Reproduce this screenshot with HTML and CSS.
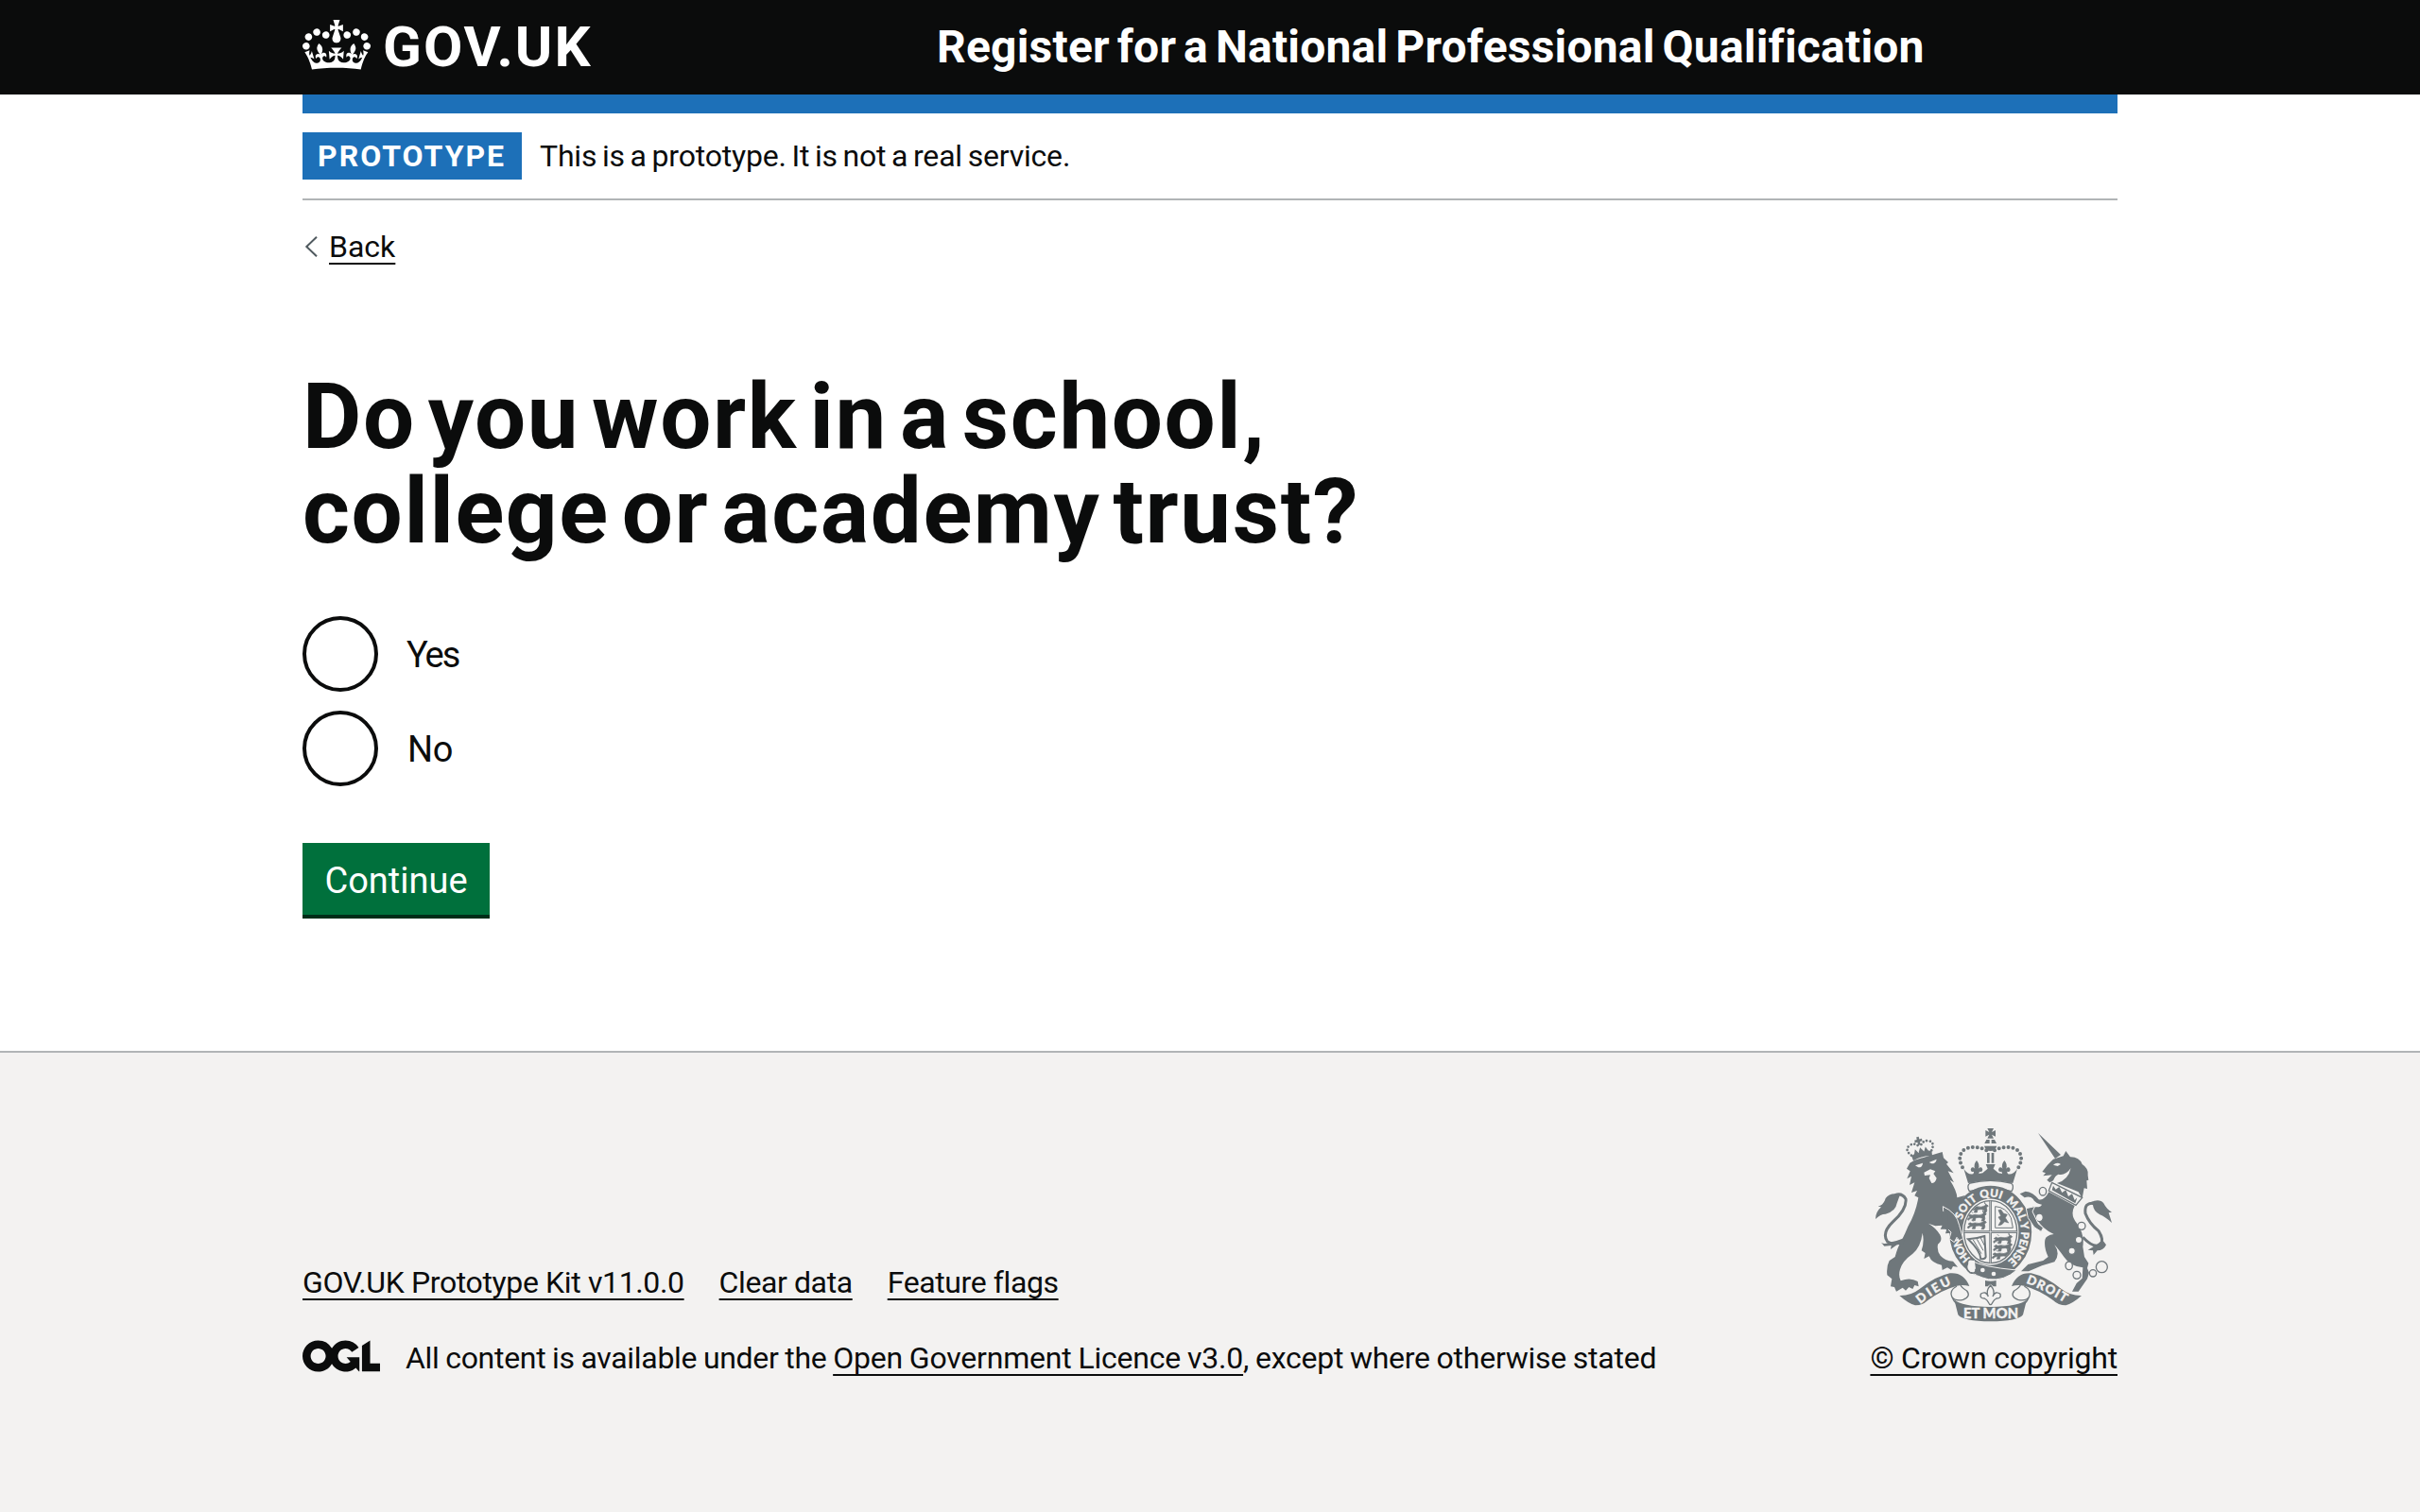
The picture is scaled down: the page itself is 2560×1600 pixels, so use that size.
FILE: index.html
```
<!DOCTYPE html>
<html lang="en">
<head>
<meta charset="utf-8">
<title>Do you work in a school, college or academy trust?</title>
<link rel="stylesheet" href="styles.css">
</head>
<body>
<header class="header">
  <div class="container header-inner">
    <a class="logo" href="#">
      <svg class="crown" viewBox="0 0 132 97" aria-hidden="true"><path fill="currentColor" d="M25 30.2c3.5 1.5 7.7-.2 9.1-3.7 1.5-3.6-.2-7.8-3.9-9.2-3.6-1.4-7.6.3-9.1 3.9-1.4 3.5.3 7.5 3.9 9zM9 39.5c3.6 1.5 7.8-.2 9.2-3.7 1.5-3.6-.2-7.8-3.9-9.1-3.6-1.5-7.6.2-9.1 3.8-1.4 3.5.3 7.5 3.8 9zM4.4 57.2c3.5 1.5 7.7-.2 9.1-3.8 1.5-3.6-.2-7.7-3.9-9.1-3.5-1.5-7.6.3-9.1 3.8-1.4 3.5.3 7.6 3.9 9.1zm38.3-21.4c3.5 1.5 7.7-.2 9.1-3.8 1.5-3.6-.2-7.7-3.9-9.1-3.6-1.5-7.6.3-9.1 3.8-1.3 3.6.4 7.7 3.9 9.1zm64.4-5.6c-3.6 1.5-7.8-.2-9.1-3.7-1.5-3.6.2-7.8 3.8-9.2 3.6-1.4 7.7.3 9.2 3.9 1.3 3.5-.4 7.5-3.9 9zm15.9 9.3c-3.6 1.5-7.7-.2-9.1-3.7-1.5-3.6.2-7.8 3.7-9.1 3.6-1.5 7.7.2 9.2 3.8 1.5 3.5-.3 7.5-3.8 9zm4.7 17.7c-3.6 1.5-7.8-.2-9.2-3.8-1.5-3.6.2-7.7 3.9-9.1 3.6-1.5 7.7.3 9.2 3.8 1.3 3.5-.4 7.6-3.9 9.1zM89.3 35.8c-3.6 1.5-7.8-.2-9.2-3.8-1.4-3.6.2-7.7 3.9-9.1 3.6-1.5 7.7.3 9.2 3.8 1.4 3.6-.3 7.7-3.9 9.1zM69.7 17.7l8.9 4.7V9.3l-8.9 2.8c-.2-.3-.5-.6-.9-.9L72.4 0H59.6l3.5 11.2c-.3.3-.6.5-.9.9l-8.8-2.8v13.1l8.8-4.7c.3.3.6.7.9.9l-5 15.4v.1c-.2.8-.4 1.6-.4 2.4 0 4.1 3.1 7.5 7 8.1h.2c.3 0 .7.1 1 .1.4 0 .7 0 1-.1h.2c4-.6 7.1-4.1 7.1-8.1 0-.8-.1-1.7-.4-2.4V34l-5.1-15.4c.4-.2.7-.6 1-.9zM66 92.8c16.9 0 32.8 1.1 47.1 3.2 4-16.9 8.9-26.7 14-33.5l-9.6-3.4c1 4.9 1.1 7.2 0 10.2-1.5-1.4-3-4.3-4.2-8.7L108.6 76c2.8-2 5-3.2 7.5-3.3-4.4 9.4-10 11.9-13.6 11.2-4.3-.8-6.3-4.6-5.6-7.9 1-4.7 5.7-5.9 8-.5 4.3-8.7-3-11.4-7.6-8.8 7.1-7.2 7.9-13.5 2.1-21.1-8 6.1-8.1 12.3-4.5 20.8-4.7-5.4-12.1-2.5-9.5 6.2 3.4-5.2 7.9-2 7.2 3.1-.6 4.3-6.4 7.8-13.5 7.2-10.3-.9-10.9-8-11.2-13.8 2.5-.5 7.1 1.8 11 7.3L80.2 60c-4.1 4.4-8 5.3-12.3 5.4 1.4-4.4 8-11.6 8-11.6H55.5s6.4 7.2 7.9 11.6c-4.2-.1-8-1-12.3-5.4l1.4 16.4c3.9-5.5 8.5-7.7 10.9-7.3-.3 5.8-.9 12.8-11.1 13.8-7.2.6-12.9-2.9-13.5-7.2-.7-5 3.8-8.3 7.1-3.1 2.7-8.7-4.6-11.6-9.4-6.2 3.7-8.5 3.6-14.7-4.6-20.8-5.8 7.6-5 13.9 2.2 21.1-4.7-2.6-11.9.1-7.7 8.8 2.3-5.5 7.1-4.2 8.1.5.7 3.3-1.3 7.1-5.7 7.9-3.5.7-9-1.8-13.5-11.2 2.5.1 4.7 1.3 7.5 3.3l-4.7-15.4c-1.2 4.4-2.7 7.2-4.3 8.7-1.1-3-.9-5.3 0-10.2l-9.5 3.4c5 6.9 9.9 16.7 14 33.5 14.8-2.1 30.8-3.2 47.7-3.2z"/></svg>
      <span class="logotype">GOV.UK</span>
    </a>
    <a class="service-name" href="#">Register for a National Professional Qualification</a>
  </div>
</header>
<div class="container">
  <div class="header-bar"></div>
  <div class="phase-banner">
    <strong class="tag">PROTOTYPE</strong>
    <span class="phase-text">This is a prototype. It is not a real service.</span>
  </div>
  <a class="back" href="#">
    <svg class="chevron" viewBox="0 0 14 22" aria-hidden="true"><path d="M13 .7 2.3 11 13 21.3" fill="none" stroke="#505a5f" stroke-width="2"/></svg>
    <span class="back-text">Back</span>
  </a>
  <main class="main">
    <h1 class="heading">Do you work in a school,<br>college or academy trust?</h1>
    <form class="form">
      <label class="radio"><input class="radio-input" type="radio" name="work"><span class="radio-text radio-yes">Yes</span></label>
      <label class="radio"><input class="radio-input" type="radio" name="work"><span class="radio-text">No</span></label>
      <button class="button" type="button">Continue</button>
    </form>
  </main>
</div>
<footer class="footer">
  <div class="container footer-inner">
    <div class="footer-meta">
      <nav class="footer-links">
        <a class="link-kit" href="#">GOV.UK Prototype Kit v11.0.0</a>
        <a class="link-clear" href="#">Clear data</a>
        <a class="link-flags" href="#">Feature flags</a>
      </nav>
      <div class="licence">
        <svg class="ogl" viewBox="0 0 483.2 195.7" aria-hidden="true"><path fill="currentColor" d="M421.5 142.8V.1l-50.7 32.3v161.1h112.4v-50.7zm-122.3-9.6A47.12 47.12 0 0 1 221 97.8c0-26 21.1-47.1 47.1-47.1 16.7 0 31.4 8.7 39.7 21.8l42.7-27.2A97.63 97.63 0 0 0 268.1 0c-36.5 0-68.3 20.1-85.1 49.7A98 98 0 0 0 97.8 0C43.9 0 0 43.9 0 97.8s43.9 97.8 97.8 97.8c36.5 0 68.3-20.1 85.1-49.7a97.76 97.76 0 0 0 149.6 25.4l19.4 22.2h3v-87.8h-80l24.3 27.5zM97.8 145c-26 0-47.1-21.1-47.1-47.1s21.1-47.1 47.1-47.1 47.1 21.1 47.1 47.1S123.8 145 97.8 145"/></svg>
        <span class="licence-text">All content is available under the <a class="link-ogl" href="#">Open Government Licence v3.0</a><span class="licence-end">, except where otherwise stated</span></span>
      </div>
    </div>
    <div class="copyright">
      <svg class="arms" viewBox="60 39 780 618" aria-hidden="true">
        <defs>
          <path id="garter" d="M437 482A97 111 0 0 1 340 371A97 111 0 0 1 437 260A97 111 0 0 1 534 371A97 111 0 0 1 437 482"/>
          <path id="motto-left" d="M214 600Q262 560 322 534"/>
          <path id="motto-right" d="M549 533Q610 556 676 598"/>
          <clipPath id="shield"><ellipse cx="437" cy="371" rx="82" ry="97"/></clipPath>
          <g id="fleur"><path d="M0-26Q12-12 5 0Q16-10 19 3Q18 12 9 9L6 18H-6L-9 9Q-18 12-19 3Q-16-10-5 0Q-12-12 0-26Z"/></g>
          <g id="passant"><path d="M-30-6q6-8 12-2l10-2q14 4 24-2q6-8 12 0l-6 6q4 10-2 16h-8l4-8l-10-3l-12 1l-2 9h-9l3-9l-8 2l-8 6l-2-5l9-6zM22-14q-8-4-5-10M-14-14l-6-6"/></g>
        </defs>
        <g fill="currentColor">
          <!-- lion -->
          <path d="M171 170L181 152L196 143L284 117L288 136L303 150L297 155L320 184L302 178L321 214L308 206Q330 240 331 262L356 255Q332 285 316 318L324 300Q330 318 334 340Q332 356 336 372L346 392L334 400L326 388L320 400L306 388L312 374L294 376L298 362L278 362L284 350L262 352L240 344Q264 358 277 380Q286 398 270 410Q266 430 278 446Q292 462 318 464L333 482L318 480L312 491L300 484L284 492L282 476Q250 470 242 448L226 456L230 438L218 430Q228 400 221 374Q216 418 190 440Q156 464 150 490Q144 510 152 526Q182 514 206 528L209 544L196 540L190 552L178 546L168 557L158 548L138 560L132 546L120 544L124 520L109 508Q106 480 116 462L134 450Q142 420 154 400Q168 372 176 352Q200 310 208 262L196 256L204 240L186 246L196 214L180 222L186 194L172 202L182 178Z"/>
          <path d="M165 396Q132 416 110 402Q90 374 128 338Q172 298 168 266Q156 246 134 254" fill="none" stroke="currentColor" stroke-width="9"/>
          <path d="M150 252Q118 244 104 264Q98 286 80 290L90 292Q72 308 72 330Q88 314 104 314Q136 306 140 280ZM90 404Q100 412 116 404Q140 400 164 390L160 410L140 412L120 426L122 414L100 416Z"/>
          <!-- unicorn -->
          <path d="M588 57L660 126L642 138ZM601 180L618 158L636 140L668 130L676 114L690 133Q718 132 728 156Q750 170 746 192L748 206L742 208L744 234L734 232L728 264L716 244L648 216Q684 206 692 168Q674 194 652 188Q642 192 636 208L625 214L616 206L632 190L604 193L612 184Z"/>
          <path d="M622 244L704 288Q688 318 712 345Q736 378 730 418L735 450L748 470L744 486L750 500L744 520L716 560L696 560L710 534L728 518L730 484Q690 480 670 450Q652 425 640 412Q660 440 640 466L600 478L558 496L534 496L556 474L604 462L620 450Q606 420 610 396Q612 382 638 378Q602 362 584 330Q580 318 566 306L584 346L602 360L596 370L578 354Q562 340 550 312L550 298L572 290Q594 296 600 284Q578 280 572 266Q562 256 545 262L530 250L548 242Q572 244 590 268Q608 272 622 244Z"/>
          <path d="M765 280Q734 276 738 312Q750 344 780 368Q798 396 786 412Q764 424 730 388" fill="none" stroke="currentColor" stroke-width="9"/>
          <path d="M750 278Q784 262 796 280Q806 300 822 308L812 310L822 342Q800 322 784 316Q764 306 762 286ZM804 412Q796 430 776 430L764 444L762 430L746 428Q776 412 792 396Z"/>
          <path d="M708 286L728 262L632 214L622 240Z" fill="#f3f2f1" stroke="currentColor" stroke-width="4"/>
          <path d="M632 238L636 224L644 236L655 228L664 246L676 238L684 258L696 250L704 270L712 262L706 280Z"/>
        </g>
        <!-- face details -->
        <path fill="#f3f2f1" d="M198 160L222 152Q222 166 208 166ZM242 150L266 140Q264 154 250 154ZM226 182L246 172L262 178L256 186L266 200Q262 216 250 216L242 200L246 190L228 192ZM636 158Q648 148 660 156L650 162Z"/>
        <g fill="#f3f2f1" stroke="currentColor" stroke-width="4">
          <ellipse cx="603" cy="242" rx="11" ry="13"/><ellipse cx="592" cy="325" rx="12" ry="13"/><circle cx="726" cy="352" r="12"/><circle cx="717" cy="396" r="11"/><circle cx="695" cy="431" r="11"/><ellipse cx="686" cy="478" rx="11" ry="13"/><circle cx="711" cy="508" r="12"/><circle cx="762" cy="502" r="11"/><circle cx="790" cy="482" r="18"/>
        </g>
        <!-- lion's crown -->
        <g transform="rotate(-14 218 125)">
          <g fill="none" stroke="currentColor" stroke-linecap="round" stroke-width="8" stroke-dasharray="0 11"><path d="M186 120Q168 98 188 88Q206 82 216 98"/><path d="M252 120Q270 98 250 88Q232 82 222 98"/></g>
          <path fill="currentColor" d="M186 122L196 118L202 104L210 118L219 102L228 118L236 104L242 118L252 122L250 138Q219 128 188 138ZM215 68H223V76H231V84H223V94H215V84H207V76H215Z"/>
        </g>
        <!-- imperial crown -->
        <g fill="none" stroke="currentColor" stroke-linecap="round" stroke-width="12" stroke-dasharray="0 15"><path d="M348 166Q328 128 356 108Q388 94 424 112"/><path d="M526 166Q546 128 518 108Q486 94 450 112"/></g>
        <g fill="currentColor">
          <path d="M427 42H447L441 54L453 48V68L441 62L447 74H427L433 62L421 68V48L433 54ZM424 78H434V90H418ZM440 78H450L456 90H440ZM417 98H457Q452 114 437 114Q422 114 417 98ZM426 120H434V152H426ZM440 120H448V152H440Z"/>
          <path d="M352 170Q364 190 382 187L388 172L396 187L412 184L428 170L422 156H452L446 170L462 184L478 187L486 172L492 187Q510 190 522 170L508 216Q437 200 366 216Z"/>
          <use href="#fleur" x="393" y="170"/><use href="#fleur" x="481" y="170"/>
        </g>
        <path d="M372 216Q437 200 502 216Q514 224 504 242Q437 222 370 242Q360 224 372 216Z" fill="#f3f2f1" stroke="currentColor" stroke-width="4"/>
        <!-- garter and shield -->
        <ellipse cx="437" cy="371" rx="110" ry="126" fill="#f3f2f1" stroke="currentColor" stroke-width="41"/>
        <ellipse cx="437" cy="371" rx="84" ry="99" fill="#f3f2f1" stroke="currentColor" stroke-width="4"/>
        <path d="M437 272V470M353 371H521" stroke="currentColor" stroke-width="8"/>
        <path d="M437 272V470M353 371H521" stroke="#f3f2f1" stroke-width="2"/>
        <g clip-path="url(#shield)" fill="currentColor" stroke="currentColor" stroke-width="2">
          <use href="#passant" x="402" y="300"/><use href="#passant" x="396" y="326"/><use href="#passant" x="396" y="352"/>
          <use href="#passant" x="478" y="398"/><use href="#passant" x="478" y="423"/><use href="#passant" x="474" y="448"/>
          <path d="M452 290Q486 292 502 326L508 358H452Z" fill="none" stroke-width="3"/>
          <path d="M462 302L470 300L478 312L490 316L484 326L494 342L482 338L472 348L462 350L470 336L462 324L470 320Z"/>
        </g>
        <g fill="none" stroke="currentColor" stroke-width="6"><path d="M366 394Q394 392 418 384L422 450Q420 458 406 456Q404 430 366 394Z"/><path d="M382 396L408 440M394 394L414 430M406 390L418 414" stroke-width="3"/></g>
        <g class="arms-text" font-size="35">
          <text><textPath href="#garter" startOffset="70" textLength="76">HON</textPath></text>
          <text><textPath href="#garter" startOffset="202" textLength="82">SOIT</textPath></text>
          <text><textPath href="#garter" startOffset="295" textLength="66">QUI</textPath></text>
          <text><textPath href="#garter" startOffset="378" textLength="78">MAL</textPath></text>
          <text><textPath href="#garter" startOffset="460">Y</textPath></text>
          <text><textPath href="#garter" startOffset="489" textLength="106">PENSE</textPath></text>
        </g>
        <!-- lion's forepaw and unicorn's hoof over the garter -->
        <path fill="currentColor" stroke="#f3f2f1" stroke-width="3" d="M286 290Q330 310 338 350L350 392L338 398L330 388L322 404L306 392L312 372L290 350Z"/>
        <path fill="currentColor" d="M280 302L300 312L304 372L284 350Z"/>
        <path fill="currentColor" stroke="#f3f2f1" stroke-width="3" d="M550 296L578 290L570 306L588 344L604 358L598 370L576 356L556 326Z"/>
        <!-- buckle and strap -->
        <path fill="currentColor" stroke="#f3f2f1" stroke-width="3" d="M376 462Q410 482 520 492Q480 528 430 521Q390 512 368 492Z"/>
        <path d="M386 460Q362 452 364 472Q356 488 372 500Q392 506 390 488" fill="#f3f2f1" stroke="currentColor" stroke-width="5"/>
        <circle cx="412" cy="492" r="7" fill="#f3f2f1"/><circle cx="447" cy="504" r="7" fill="#f3f2f1"/>
        <!-- pendant -->
        <path fill="currentColor" d="M420 525Q437 529 455 525V544H446L437 536L428 544H420Z"/>
        <path d="M437 540Q454 560 444 576Q452 556 468 568Q472 582 456 582Q448 586 444 594Q437 610 430 594Q426 586 418 582Q402 582 406 568Q422 556 430 576Q420 560 437 540Z" fill="#f3f2f1" stroke="currentColor" stroke-width="4"/>
        <!-- motto scroll -->
        <g id="scroll"><path fill="currentColor" d="M148 573Q184 574 212 552Q262 512 308 502Q352 498 370 543Q350 538 330 542Q280 556 238 588Q222 604 198 604Q176 598 148 573Z"/><path d="M330 543Q306 556 314 576Q324 592 350 586Q376 576 362 558Q346 548 342 540M314 576Q320 592 332 602" fill="none" stroke="currentColor" stroke-width="4"/></g>
        <use href="#scroll" transform="matrix(-1 0 0 1 874 0)"/>
        <path fill="currentColor" d="M322 586Q345 608 437 609Q529 608 552 586L540 634Q524 655 437 655Q350 655 334 634Z"/>
        <g class="arms-text" font-size="44">
          <text x="351" y="645" textLength="174">ET MON</text>
          <text font-size="40"><textPath href="#motto-left" textLength="118">DIEU</textPath></text>
          <text font-size="40"><textPath href="#motto-right" textLength="138">DROIT</textPath></text>
        </g>
      </svg>
      <a class="link-copyright" href="#">© Crown copyright</a>
    </div>
  </div>
</footer>
</body>
</html>
```
FILE: styles.css
```
* { box-sizing: border-box; }
body {
  margin: 0;
  min-height: 1600px;
  display: flex;
  flex-direction: column;
  background: #fff;
  color: #0b0c0c;
  font: 32px/40px Roboto, "Noto Sans", sans-serif;
  letter-spacing: -0.3px;
}
a { color: inherit; text-decoration: none; }
.container { width: 1920px; margin: 0 auto; }

.header { background: #0b0c0c; color: #fff; }
.header-inner { height: 100px; display: flex; align-items: center; }
.logo { display: flex; align-items: center; width: 671px; }
.crown { width: 72px; height: 53px; margin: -5px 13px 0 0; }
.logotype { font-size: 60px; line-height: 100px; font-weight: 700; letter-spacing: 2px; }
.service-name { font-size: 48px; line-height: 100px; font-weight: 700; letter-spacing: 0.2px; word-spacing: -4.2px; }
.header-bar { height: 20px; background: #1d70b8; }

.phase-banner {
  height: 92px;
  display: flex;
  align-items: center;
  gap: 19px;
  border-bottom: 2px solid #b1b4b6;
}
.tag {
  height: 50px;
  width: 232px;
  padding-left: 16px;
  background: #1d70b8;
  color: #fff;
  font-weight: 700;
  line-height: 50px;
  letter-spacing: 2px;
}
.phase-text { letter-spacing: -0.2px; word-spacing: -2px; }

.back { display: flex; align-items: center; width: max-content; height: 40px; margin-top: 29px; }
.chevron { width: 14px; height: 22px; margin: 0 12px 0 2px; }
.back-text, .footer a {
  text-decoration: underline;
  text-decoration-thickness: 2px;
  text-underline-offset: 6px;
  text-decoration-skip-ink: none;
}
.back-text { letter-spacing: 0; }

.main { padding-top: 110px; }
.heading { margin: 0; font-size: 96px; line-height: 100px; font-weight: 700; letter-spacing: 1.6px; word-spacing: -12.5px; }
.form { display: flex; flex-direction: column; align-items: flex-start; gap: 20px; margin-top: 61px; }
.radio { display: flex; align-items: center; gap: 31px; height: 80px; font-size: 38px; line-height: 80px; }
.radio-input { appearance: none; width: 80px; height: 80px; margin: 0; border: 4px solid #0b0c0c; border-radius: 50%; }
.radio-text { padding-top: 2px; }
.radio-yes { margin-left: -1px; letter-spacing: -2px; }
.button {
  width: 198px;
  height: 80px;
  margin-top: 40px;
  padding: 3px 0 0;
  border: 0;
  border-bottom: 4px solid #002d18;
  background: #00703c;
  color: #fff;
  font: inherit;
  font-size: 38px;
  letter-spacing: 0;
}

.footer { flex: 1; margin-top: 140px; border-top: 2px solid #b1b4b6; background: #f3f2f1; }
.footer-inner { display: flex; justify-content: space-between; align-items: flex-end; height: 343px; }
.footer-meta { display: flex; flex-direction: column; gap: 40px; }
.footer-links { display: flex; gap: 37px; white-space: nowrap; }
.link-kit { letter-spacing: -0.37px; }
.link-clear, .link-flags { letter-spacing: -0.4px; }
.licence { display: flex; align-items: center; }
.ogl { width: 82px; height: 34px; margin: -4px 27px 0 0; }
.licence-text { letter-spacing: -0.31px; word-spacing: -0.9px; }
.link-ogl { letter-spacing: -0.2px; }
.licence-end { letter-spacing: -0.25px; }
.copyright { display: flex; flex-direction: column; align-items: flex-end; }
.arms { width: 260px; height: 206px; margin-bottom: 18px; color: #6f777b; }
.arms-text { fill: #f3f2f1; stroke: #f3f2f1; stroke-width: 1; font-family: Lato, sans-serif; font-weight: 900; letter-spacing: 0; word-spacing: 0; }
.link-copyright { letter-spacing: -0.2px; }
```
